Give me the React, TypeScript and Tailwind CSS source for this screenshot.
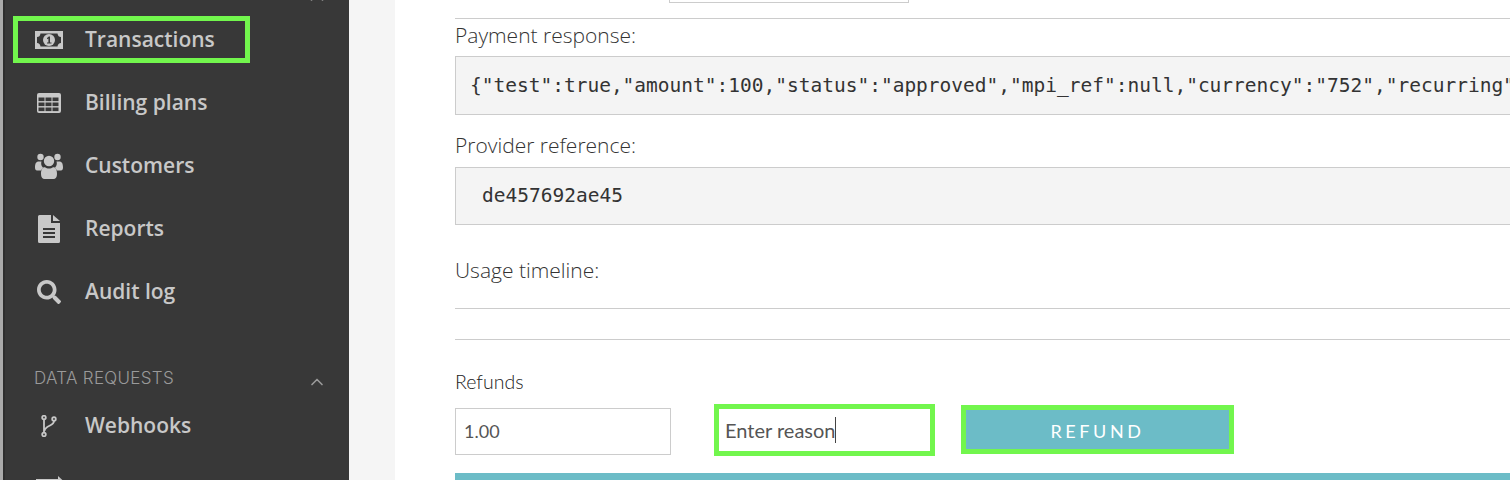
import { FaSearch } from 'react-icons/fa';
import { FiChevronUp } from 'react-icons/fi';

function MoneyIcon() {
  return (
    <svg viewBox="0 0 28 18" className="w-[28px] h-[18px]">
      <path
        fillRule="evenodd"
        fill="currentColor"
        d="M0 0H28V18H0ZM2 6V12Q5 12 5.5 15.5H22.500Q23 12 26 12V6Q23 6 22.500 2.500H5.500Q5 6 2 6Z"
      />
      <circle cx="14" cy="9" r="6" fill="currentColor" />
      <path fill="#383838" d="M12 12.500H16.500V11.500H15V5.500H13.800L12 7V8.200L13.400 7.400V11.500H12Z" />
    </svg>
  );
}

function TableIcon() {
  return (
    <svg viewBox="0 0 24 20" className="w-[24px] h-[20px]">
      <rect x="0" y="0" width="24" height="20" rx="2" fill="currentColor" />
      {[1.5, 8.5, 15.5].map((x) =>
        [4.5, 9.5, 14.5].map((y) => <rect key={`${x}-${y}`} x={x} y={y} width={6} height={3.6} fill="#383838" />),
      )}
    </svg>
  );
}

function UsersIcon() {
  return (
    <svg viewBox="0 0 28 26" className="w-[28px] h-[26px]" fill="currentColor">
      <circle cx="5.500" cy="4" r="3.200" />
      <circle cx="22.500" cy="4" r="3.200" />
      <path d="M0 14.500C0 10 1.500 8.500 4 8.500H6.500C5.800 10.500 6.200 13 8 14.500L6 17.500H2C.8 17.500 0 16.500 0 14.500Z" />
      <path d="M28 14.500C28 10 26.500 8.500 24 8.500H21.500C22.200 10.500 21.800 13 20 14.500L22 17.500H26C27.200 17.500 28 16.500 28 14.500Z" />
      <circle cx="14" cy="8" r="5.200" />
      <path d="M6 21C6 16 7.500 14.200 10 14.200C11 15 12.500 15.500 14 15.500C15.500 15.500 17 15 18 14.200C20.500 14.200 22 16 22 21C22 24.500 20.500 26 18.500 26H9.500C7.500 26 6 24.500 6 21Z" />
    </svg>
  );
}

function ReportIcon() {
  return (
    <svg viewBox="0 0 22 28" className="w-[22px] h-[28px]">
      <path
        fill="currentColor"
        fillRule="evenodd"
        d="M0 1.500Q0 0 1.500 0H13V8H22V26.500Q22 28 20.500 28H1.500Q0 28 0 26.500ZM5 13V15H17V13ZM5 17V19H17V17ZM5 21V23H17V21Z"
      />
      <path fill="currentColor" d="M15 0L22 6H15Z" />
    </svg>
  );
}

function ForkIcon() {
  return (
    <svg viewBox="0 0 16 22" className="w-[16px] h-[22px]" fill="none" stroke="currentColor" strokeWidth="1.8">
      <circle cx="3" cy="2.500" r="1.800" />
      <circle cx="13" cy="4" r="1.800" />
      <circle cx="3" cy="19.500" r="1.800" />
      <path d="M3 4.500V17.500M13 6C13 11 4 10.500 3.500 16" />
    </svg>
  );
}

function ExchangeIcon() {
  return (
    <svg viewBox="0 0 30 26" className="w-[30px] h-[26px] shrink-0" fill="currentColor">
      <path d="M2 3H24V0L30 5.500L24 11V8H6L2 8Z" />
      <path d="M28 20H8V25L2 19L8 13V16H24L28 16Z" />
    </svg>
  );
}

const navItems = [
  { label: 'Billing plans', icon: <TableIcon /> },
  { label: 'Customers', icon: <UsersIcon /> },
  { label: 'Reports', icon: <ReportIcon /> },
  { label: 'Audit log', icon: <FaSearch className="w-[24px] h-[24px]" /> },
];

function NavRow({ label, icon }: { label: string; icon: React.ReactNode }) {
  return (
    <div className="h-[63px] flex items-center pl-[35px]">
      <div className="w-[28px] flex justify-center">{icon}</div>
      <span className="ml-[22px] text-[21px] font-semibold">{label}</span>
    </div>
  );
}

export default function App() {
  return (
    <div className="h-[480px] overflow-hidden flex bg-white font-['Open_Sans',sans-serif]">
      {/* Sidebar */}
      <aside className="w-[349px] shrink-0 h-full overflow-hidden bg-[#383838] text-[#c8c8c8] flex">
        <div className="w-[3px] bg-[#aaaaaa] shrink-0" />
        <div className="w-[2px] bg-[#2e2e2e] shrink-0" />
        <div className="flex-1 -ml-[5px]">
          <div className="h-[16px] flex justify-end pr-[21px]">
            <FiChevronUp className="w-[22px] h-[22px] -mt-[14px] text-[#999]" />
          </div>
          <div className="ml-[13px] w-[237px] h-[47px] border-[5px] border-[#72f64d] flex items-center pl-[17px]">
            <MoneyIcon />
            <span className="ml-[22px] text-[21px] font-semibold">Transactions</span>
          </div>
          <div className="pt-[8px]">
            {navItems.map((item) => (
              <NavRow key={item.label} label={item.label} icon={item.icon} />
            ))}
          </div>
          <div className="mt-[44px] h-[24px] flex items-center justify-between pl-[34px] pr-[22px] text-[#9a9a9a]">
            <span className="text-[17px] tracking-[0.3px] font-light font-['Inter',sans-serif]">DATA REQUESTS</span>
            <FiChevronUp className="w-[20px] h-[20px] mt-[6px]" />
          </div>
          <div className="mt-[3px]">
            <NavRow label="Webhooks" icon={<ForkIcon />} />
            <NavRow label="Flows" icon={<ExchangeIcon />} />
          </div>
        </div>
      </aside>

      {/* Main */}
      <main className="flex-1 min-w-0 bg-[#f5f5f5] pl-[46px]">
        <div className="h-full bg-white pl-[60px] overflow-hidden text-[21px] font-light text-[#333]">
          <div className="w-[240px] h-[3px] ml-[214px] border border-t-0 border-[#ccc]" />
          <div className="mt-[15px] border-t border-[#ccc] leading-[32px]">Payment response:</div>
          <div className="mt-[5px] h-[59px] bg-[#f4f4f4] border-y border-l border-[#ccc] pl-[14px] flex items-center whitespace-nowrap overflow-hidden font-['DejaVu_Sans_Mono',monospace] font-normal text-[19.5px] text-[#333]">
            {'{"test":true,"amount":100,"status":"approved","mpi_ref":null,"currency":"752","recurring":false}'}
          </div>
          <div className="mt-[14px] leading-[32px]">Provider reference:</div>
          <div className="mt-[6px] h-[58px] bg-[#f4f4f4] border-y border-l border-[#ccc] pl-[26px] flex items-center font-['DejaVu_Sans_Mono',monospace] font-normal text-[19.5px]">
            de457692ae45
          </div>
          <div className="mt-[29px] leading-[32px]">Usage timeline:</div>
          <div className="mt-[22px] border-t border-[#ccc]" />
          <div className="mt-[30px] border-t border-[#ccc]" />
          <div className="mt-[30px] leading-[24px] text-[19.5px] font-light font-['Lato',sans-serif] text-[#222]">Refunds</div>
          <div className="mt-[13px] flex items-start font-['Lato',sans-serif] font-normal">
            <div className="mt-[1px] w-[216px] h-[47px] border border-[#ccc] flex items-center pl-[8px] text-[18px] text-[#555]">1.00</div>
            <div className="ml-[43px] -mt-[3px] w-[221px] h-[52px] border-[5px] border-[#72f64d] flex items-center pl-[6px] text-[20px] text-[#555]">
              Enter reason
              <span className="w-[1px] h-[26px] bg-[#444]" />
            </div>
            <div className="ml-[26px] -mt-[2px] w-[273px] h-[49px] border-[5px] border-[#72f64d] bg-[#6cbcc7] flex items-center justify-center pt-[4px] text-[18px] tracking-[0.2em] text-white font-normal">
              REFUND
            </div>
          </div>
          <div className="mt-[17px] h-[40px] bg-[#6cbcc7]" />
        </div>
      </main>
    </div>
  );
}
